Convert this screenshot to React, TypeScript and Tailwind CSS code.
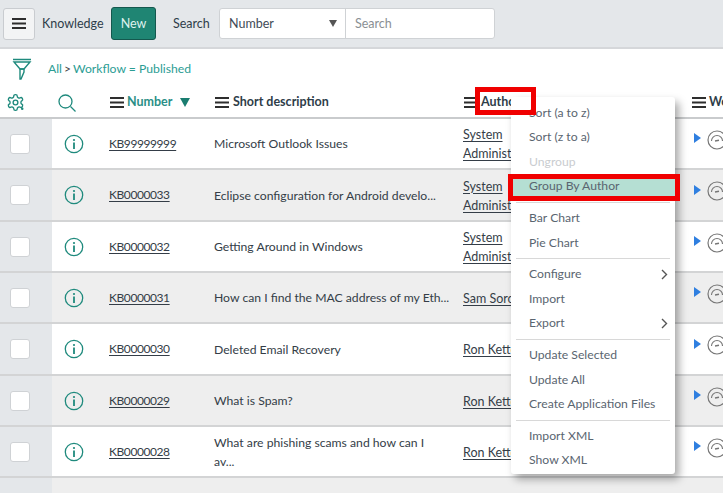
import { Fragment } from 'react';

const rows = [
  { id: 'KB99999999', desc: 'Microsoft Outlook Issues', author: ['System', 'Administrator'], shade: false, h: 'h-[51px]' },
  { id: 'KB0000033', desc: 'Eclipse configuration for Android develo...', author: ['System', 'Administrator'], shade: true, h: 'h-[52px]' },
  { id: 'KB0000032', desc: 'Getting Around in Windows', author: ['System', 'Administrator'], shade: false, h: 'h-[51px]' },
  { id: 'KB0000031', desc: 'How can I find the MAC address of my Eth...', author: ['Sam Sorokin'], shade: true, h: 'h-[51px]' },
  { id: 'KB0000030', desc: 'Deleted Email Recovery', author: ['Ron Kettering'], shade: false, h: 'h-[52px]' },
  { id: 'KB0000029', desc: 'What is Spam?', author: ['Ron Kettering'], shade: true, h: 'h-[51px]' },
  { id: 'KB0000028', desc: 'What are phishing scams and how can I\nav...', author: ['Ron Kettering'], shade: false, h: 'h-[51px]' },
];

const menu = [
  ['Sort (a to z)', 'Sort (z to a)', 'Ungroup', 'Group By Author'],
  ['Bar Chart', 'Pie Chart'],
  ['Configure', 'Import', 'Export'],
  ['Update Selected', 'Update All', 'Create Application Files'],
  ['Import XML', 'Show XML'],
];

function Burger({ className = '' }: { className?: string }) {
  return (
    <svg width="14" height="11" viewBox="0 0 14 11" className={`shrink-0 ${className}`}>
      <path d="M0 0h14v2H0zM0 4.5h14v2H0zM0 9h14v2H0z" fill="#2e2e2e" />
    </svg>
  );
}

function InfoIcon() {
  return (
    <svg width="20" height="20" viewBox="0 0 20 20">
      <circle cx="10" cy="10" r="8.7" fill="none" stroke="#1f8a7d" strokeWidth="1.3" />
      <circle cx="10" cy="6" r="1.1" fill="#1f8a7d" />
      <path d="M10 8.5v6.5" stroke="#1f8a7d" strokeWidth="1.8" />
    </svg>
  );
}

function Gauge() {
  return (
    <svg width="20" height="20" viewBox="0 0 20 20" className="shrink-0">
      <circle cx="10" cy="10" r="9" fill="none" stroke="#767676" strokeWidth="1.2" />
      <path d="M4.5 11a5.5 5.5 0 0 1 11 0" fill="none" stroke="#767676" strokeWidth="1.1" />
      <path d="M8 11l4-.8" stroke="#767676" strokeWidth="1.4" />
    </svg>
  );
}

export default function App() {
  return (
    <div className="relative h-[493px] w-[723px] overflow-hidden bg-white font-['Lato','Noto_Sans',sans-serif] text-[12.5px] text-[#343d47]">
      {/* top bar */}
      <div className="flex h-[49px] items-center border-b-2 border-[#d5d7da] bg-[#e4e7ea] pl-[3px]">
        <button className="flex h-[32px] w-[32px] items-center justify-center rounded-[3px] border border-[#c9ccd0] bg-[#f3f4f5]">
          <Burger />
        </button>
        <span className="ml-[7px] w-[61px] whitespace-nowrap pt-[2px] text-[#2e3d49]">Knowledge</span>
        <button className="ml-[8px] h-[33px] w-[45px] rounded-[3px] border border-[#14584e] bg-[#1f8573] pt-[2px] text-[#dff2ee]">New</button>
        <span className="ml-[17px] w-[37px] pt-[2px] text-[#2e3d49]">Search</span>
        <div className="ml-[9px] flex h-[31px] w-[276px] rounded-[3px] border border-[#cfd2d5] bg-white">
          <div className="flex w-[126px] items-center justify-between border-r border-[#cfd2d5] pl-[9px] pr-[8px] text-[#3f4b57]">
            <span className="pt-[1px]">Number</span>
            <span className="h-0 w-0 border-x-[4px] border-t-[7px] border-x-transparent border-t-[#555]" />
          </div>
          <span className="flex items-center pl-[9px] pt-[1px] text-[#8a8f94]">Search</span>
        </div>
      </div>

      {/* filter */}
      <div className="flex h-[40px] items-center pl-[12px]">
        <svg width="20" height="22" viewBox="0 0 20 22">
          <path d="M1 1.5h18M2 4h16l-6 7H8z" fill="none" stroke="#1f8a7d" strokeWidth="1.4" />
          <path d="M8 11h4v3l-3 7H8z" fill="none" stroke="#1f8a7d" strokeWidth="1.4" />
        </svg>
        <span className="ml-[16px] text-[12.2px] text-[#2b9d94]">All</span>
        <span className="mx-[2px] text-[12px] text-[#444]">&gt;</span>
        <span className="text-[12.2px] text-[#2b9d94]">Workflow = Published</span>
      </div>

      {/* column headers */}
      <div className="flex h-[30px] items-center border-b-2 border-[#c9cbcd] pb-[1px] font-bold">
        <div className="flex w-[52px] shrink-0 pl-[6px]">
          <svg width="19" height="19" viewBox="0 0 24 24" fill="none" stroke="#1f8a7d" strokeWidth="1.7">
            <path d="M12.22 2h-.44a2 2 0 0 0-2 2v.18a2 2 0 0 1-1 1.73l-.43.25a2 2 0 0 1-2 0l-.15-.08a2 2 0 0 0-2.73.73l-.22.38a2 2 0 0 0 .73 2.73l.15.1a2 2 0 0 1 1 1.72v.51a2 2 0 0 1-1 1.74l-.15.09a2 2 0 0 0-.73 2.73l.22.38a2 2 0 0 0 2.73.73l.15-.08a2 2 0 0 1 2 0l.43.25a2 2 0 0 1 1 1.73V20a2 2 0 0 0 2 2h.44a2 2 0 0 0 2-2v-.18a2 2 0 0 1 1-1.73l.43-.25a2 2 0 0 1 2 0l.15.08a2 2 0 0 0 2.73-.73l.22-.39a2 2 0 0 0-.73-2.73l-.15-.08a2 2 0 0 1-1-1.74v-.5a2 2 0 0 1 1-1.74l.15-.09a2 2 0 0 0 .73-2.73l-.22-.38a2 2 0 0 0-2.73-.73l-.15.08a2 2 0 0 1-2 0l-.43-.25a2 2 0 0 1-1-1.73V4a2 2 0 0 0-2-2z" />
            <circle cx="12" cy="12" r="3" />
            <circle cx="20.5" cy="20" r="1.6" fill="#1f8a7d" stroke="none" />
          </svg>
        </div>
        <div className="flex w-[58px] shrink-0 pl-[6px]">
          <svg width="18" height="18" viewBox="0 0 18 18" fill="none" stroke="#1f8a7d" strokeWidth="1.3">
            <circle cx="7.5" cy="7.5" r="6.5" />
            <path d="M12.5 12.5l5 5" />
          </svg>
        </div>
        <div className="flex w-[105px] shrink-0 items-center gap-[3px] text-[#2b8f87]">
          <Burger />
          <span>Number</span>
          <span className="ml-[5px] h-0 w-0 border-x-[5px] border-t-[9px] border-x-transparent border-t-[#1a7d70]" />
        </div>
        <div className="flex w-[249px] shrink-0 items-center gap-[4px] text-[#2e3d49]">
          <Burger />
          <span>Short description</span>
        </div>
        <div className="flex w-[127px] shrink-0 items-center gap-[3px] text-[#2e3d49]">
          <Burger />
          <span>Author</span>
        </div>
        <div className="flex w-[101px] shrink-0 items-center">
          <Burger />
        </div>
        <div className="flex shrink-0 items-center gap-[3px] text-[#2e3d49]">
          <Burger />
          <span>Workflow</span>
        </div>
      </div>

      {/* rows */}
      {rows.map((r) => (
        <div key={r.id} className={`flex ${r.h} items-center border-b-2 border-[#d3d4d5] ${r.shade ? 'bg-[#eeeeee]' : 'bg-white'}`}>
          <div className="flex h-full w-[52px] shrink-0 items-center bg-[#e4e7ea] pl-[10px]">
            <div className="h-[20px] w-[20px] rounded-[3px] border border-[#cfd2d5] bg-white" />
          </div>
          <div className="flex w-[57px] shrink-0 pl-[12px]">
            <InfoIcon />
          </div>
          <div className="w-[105px] shrink-0 text-[12px] tracking-[-0.42px] text-[#343d47] underline underline-offset-2">{r.id}</div>
          <div className="w-[249px] shrink-0 whitespace-pre-line text-[12.2px] leading-[19px] text-[#343d47]">{r.desc}</div>
          <div className="w-[231px] shrink-0 whitespace-nowrap pt-[1px] leading-[19px] underline underline-offset-2">
            {r.author.map((a) => (
              <div key={a}>{a}</div>
            ))}
          </div>
          <div className="flex shrink-0 items-center gap-[6px] pb-[8px]">
            <span className="mb-[3px] h-0 w-0 border-y-[5px] border-l-[7px] border-y-transparent border-l-[#2f7fe0]" />
            <Gauge />
          </div>
        </div>
      ))}
      <div className="flex h-[20px] bg-[#eeeeee]">
        <div className="w-[52px] bg-[#e4e7ea]" />
      </div>

      {/* column context menu */}
      <div className="absolute left-[511px] top-[97px] w-[164px] rounded-[3px] bg-white pb-[1px] pt-[3.5px] text-[12.2px] text-[#5a6570] shadow-[4px_5px_9px_rgba(0,0,0,0.35)]">
        {menu.map((group, i) => (
          <Fragment key={group[0]}>
            {i > 0 && <div className="mx-[5px] my-[3px] border-t border-[#d8d8d8]" />}
            {group.map((item) => (
              <div
                key={item}
                className={`flex h-[24.6px] items-center justify-between whitespace-nowrap pl-[18px] pr-[7px] ${item === 'Ungroup' ? 'text-[#c9cccf]' : ''} ${item === 'Group By Author' ? 'bg-[#b5dfd3]' : ''}`}
              >
                <span>{item}</span>
                {(item === 'Configure' || item === 'Export') && (
                  <svg width="7" height="11" viewBox="0 0 7 11" fill="none" stroke="#555" strokeWidth="1.4">
                    <path d="M1 1l4.5 4.5L1 10" />
                  </svg>
                )}
              </div>
            ))}
          </Fragment>
        ))}
      </div>

      {/* red annotation boxes */}
      <div className="absolute left-[475px] top-[87px] h-[28px] w-[61px] border-[5px] border-[#f00000]" />
      <div className="absolute left-[508px] top-[174px] h-[27px] w-[172px] border-[5px] border-[#f00000]" />
    </div>
  );
}
